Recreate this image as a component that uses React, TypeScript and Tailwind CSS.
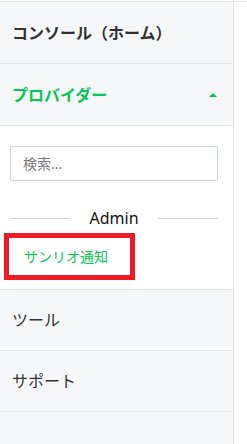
const font = "font-['Noto_Sans','Noto_Sans_CJK_JP',sans-serif]";

export default function App() {
  return (
    <div className={`mt-px h-[443px] w-[247px] border-t border-[#e5e7eb] bg-white ${font}`}>
      <aside className="flex h-full w-[234px] flex-col border-r border-[#e1e5ea] bg-[#f6f7f9]">
        <div className="flex h-[62px] items-center border-b border-[#e1e5ea] pl-3 text-[16px] font-bold text-[#333]">
          コンソール（ホーム）
        </div>

        <div className="flex h-[62px] items-center justify-between border-b border-[#e1e5ea] pl-3 pr-4">
          <span className="text-[16px] font-bold text-[#06c755]">プロバイダー</span>
          <span className="h-0 w-0 border-x-4 border-b-4 border-x-transparent border-b-[#06c755]" />
        </div>

        <div className="border-b border-[#e1e5ea] bg-white pb-[9px] pt-5">
          <input
            placeholder="検索..."
            className="ml-[10px] h-[35px] w-[208px] rounded-[2px] border border-[#ced4da] bg-white px-3 text-[14px] text-[#333] placeholder:text-[#7a7a7a] focus:outline-none"
          />

          <div className="mx-[10px] mt-[25px] flex h-6 w-[208px] items-center">
            <div className="h-px flex-1 bg-[#d3d7dc]" />
            <span className="px-[19px] text-[16px] text-[#111]">Admin</span>
            <div className="h-px flex-1 bg-[#d3d7dc]" />
          </div>

          <div className="ml-1 mt-[3px] flex h-[47px] w-[131px] items-center border-[5px] border-[#ed1c24] pl-[15px] text-[14px] text-[#06c755]">
            サンリオ通知
          </div>
        </div>

        <div className="flex h-[61px] items-center border-b border-[#e1e5ea] pl-3 text-[16px] text-[#333]">
          ツール
        </div>
        <div className="flex h-[61px] items-center border-b border-[#e1e5ea] pl-3 text-[16px] text-[#333]">
          サポート
        </div>
      </aside>
    </div>
  );
}
